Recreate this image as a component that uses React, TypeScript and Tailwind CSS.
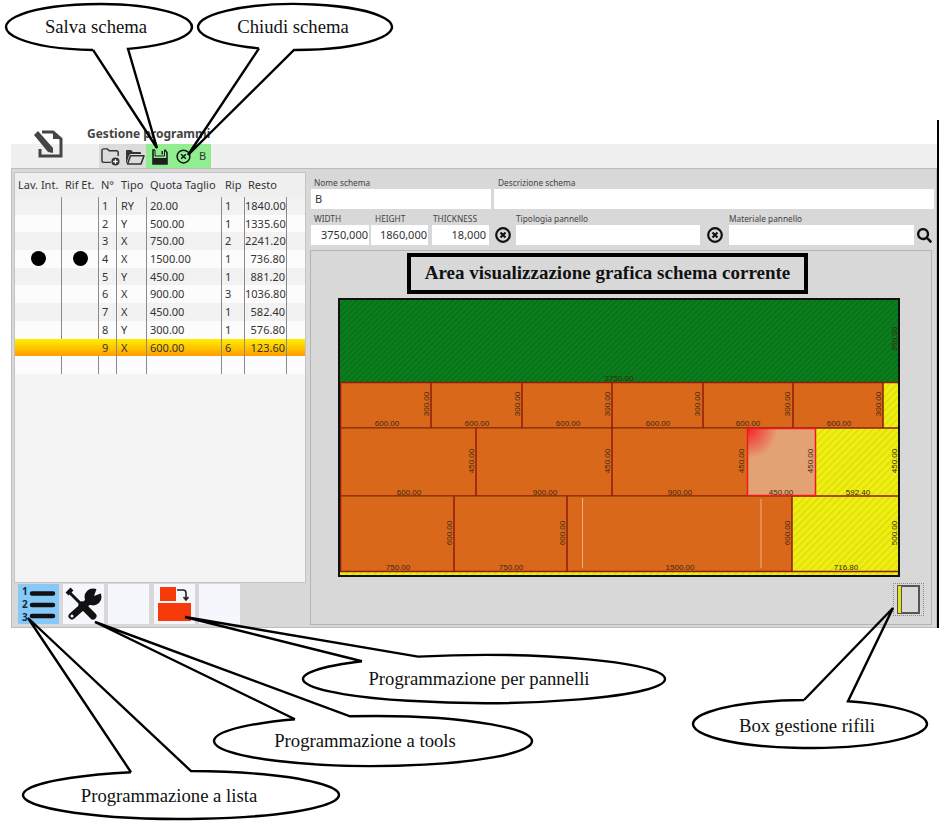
import { FaSearch } from "react-icons/fa";

const rows = [
  { n: "1", tipo: "RY", quota: "20.00", rip: "1", resto: "1840.00" },
  { n: "2", tipo: "Y", quota: "500.00", rip: "1", resto: "1335.60" },
  { n: "3", tipo: "X", quota: "750.00", rip: "2", resto: "2241.20" },
  { n: "4", tipo: "X", quota: "1500.00", rip: "1", resto: "736.80", dots: true },
  { n: "5", tipo: "Y", quota: "450.00", rip: "1", resto: "881.20" },
  { n: "6", tipo: "X", quota: "900.00", rip: "3", resto: "1036.80" },
  { n: "7", tipo: "X", quota: "450.00", rip: "1", resto: "582.40" },
  { n: "8", tipo: "Y", quota: "300.00", rip: "1", resto: "576.80" },
  { n: "9", tipo: "X", quota: "600.00", rip: "6", resto: "123.60", selected: true },
  { n: "", tipo: "", quota: "", rip: "", resto: "" },
];

const gridCols = "grid grid-cols-[47px_37px_18px_30px_75px_23px_42px_1fr]";
const cellClass = "h-full border-r border-[#8a8a8a] leading-[17px] overflow-hidden";
const inputClass = "h-[20px] bg-white text-[11px] leading-[20px] text-[#333]";
const labelClass = "text-[8.3px] leading-[12px] text-[#444]";

// tail runs from the ellipse edge at x1, out to the tip, back to the edge at x2
const callouts = [
  { cx: 99, cy: 27, rx: 93, ry: 23, x1: 93, x2: 128, tip: [157, 148], text: "Salva schema", tx: 96, ty: 33 },
  { cx: 295, cy: 27, rx: 97, ry: 23, x1: 259, x2: 294, tip: [188, 155], text: "Chiudi schema", tx: 293, ty: 33 },
  { cx: 484, cy: 679, rx: 181, ry: 24, x1: 362, x2: 418, tip: [185, 617], text: "Programmazione per pannelli", tx: 479, ty: 685 },
  { cx: 373, cy: 741, rx: 159, ry: 25, x1: 295, x2: 350, tip: [95, 622], text: "Programmazione a tools", tx: 365, ty: 747 },
  { cx: 181, cy: 795, rx: 158, ry: 24, x1: 131, x2: 191, tip: [28, 618], text: "Programmazione a lista", tx: 169, ty: 802 },
  { cx: 810, cy: 724, rx: 117, ry: 24, x1: 804, x2: 848, tip: [893, 608], text: "Box gestione rifili", tx: 807, ty: 732 },
];

const calloutPath = (c: (typeof callouts)[number]) => {
  const below = c.tip[1] > c.cy;
  const edge = (x: number) => {
    const dy = c.ry * Math.sqrt(1 - ((x - c.cx) / c.rx) ** 2);
    return below ? c.cy + dy : c.cy - dy;
  };
  return `M${c.x1} ${edge(c.x1)} L${c.tip[0]} ${c.tip[1]} L${c.x2} ${edge(c.x2)} A${c.rx} ${c.ry} 0 1 ${below ? 0 : 1} ${c.x1} ${edge(c.x1)}`;
};

const sheetLabels = [
  ["3750.00", 619, 381],
  ["600.00", 387, 426], ["600.00", 477, 426], ["600.00", 568, 426],
  ["600.00", 658, 426], ["600.00", 748, 426], ["600.00", 839, 426],
  ["600.00", 409, 495], ["900.00", 545, 495], ["900.00", 680, 495],
  ["450.00", 781, 495], ["592.40", 858, 495],
  ["750.00", 398, 570], ["750.00", 511, 570], ["1500.00", 680, 570], ["716.80", 846, 570],
] as const;

const sheetSideLabels = [
  ["350.00", 898, 339],
  ["300.00", 430, 404], ["300.00", 521, 404], ["300.00", 611, 404],
  ["300.00", 701, 404], ["300.00", 791, 404], ["300.00", 882, 404],
  ["450.00", 475, 461], ["450.00", 611, 461], ["450.00", 745, 461],
  ["450.00", 814, 461], ["450.00", 898, 461],
  ["600.00", 453, 533], ["600.00", 566, 533], ["600.00", 791, 533], ["500.00", 898, 533],
] as const;

const NoteEditIcon = () => (
  <svg width="30" height="28" viewBox="0 0 30 28">
    <path d="M9 2 H20 L28 9 V26 H7 V19" fill="none" stroke="#454545" strokeWidth="3" />
    <path d="M20 2 V9 H28 Z" fill="#454545" />
    <path d="M1 5 L5 1 L20 18 L20 23 L15 22 Z" fill="#454545" />
  </svg>
);

const FolderPlusIcon = () => (
  <svg width="19" height="18" viewBox="0 0 21 20">
    <path d="M1 14 V3 Q1 1 3 1 H7 L9 3 H17 Q19 3 19 5 V9 M1 14 Q1 16 3 16 H11" fill="none" stroke="#333" strokeWidth="1.6" />
    <circle cx="16" cy="15" r="4.5" fill="#333" />
    <path d="M16 12.5 V17.5 M13.5 15 H18.5" stroke="#fff" strokeWidth="1.4" />
  </svg>
);

const FolderOpenIcon = () => (
  <svg width="20" height="16" viewBox="0 0 20 16">
    <path d="M1 14 V2 Q1 1 2 1 H6 L8 3 H15 Q16 3 16 4 V5 H6 Q4.5 5 4 6.5 L1.5 14 Z" fill="#333" />
    <path d="M2.5 15 L5.5 6.8 H19 L16 15 Z" fill="none" stroke="#333" strokeWidth="1.6" strokeLinejoin="round" />
  </svg>
);

const SaveIcon = () => (
  <svg width="16" height="16" viewBox="0 0 16 16">
    <path d="M3 1 H1 V15 H15 V3.5 L13 1 H12.5" fill="none" stroke="#1f1f1f" strokeWidth="1.6" />
    <rect x="1" y="9" width="14" height="6" fill="#1f1f1f" />
    <path d="M3 1 V7 H12.5 V1" fill="none" stroke="#1f1f1f" strokeWidth="1" />
    <rect x="9.5" y="2" width="1.5" height="3.5" fill="#1f1f1f" />
  </svg>
);

const CloseCircleIcon = ({ size = 15, width = 1.6 }: { size?: number; width?: number }) => (
  <svg width={size} height={size} viewBox="0 0 16 16">
    <circle cx="8" cy="8" r="6.8" fill="none" stroke="#111" strokeWidth={width} />
    <path d="M5.5 5.5 L10.5 10.5 M10.5 5.5 L5.5 10.5" stroke="#111" strokeWidth={width} />
  </svg>
);

const ListIcon = () => (
  <svg width="41" height="40" viewBox="0 0 41 40">
    <path d="M14 9.5 H35 M14 21 H35 M14 32 H35" stroke="#111" strokeWidth="4.5" strokeLinecap="round" />
    <text x="4" y="11" fontSize="10" fontWeight="700" fill="#1b2a38">1</text>
    <text x="4" y="24" fontSize="10" fontWeight="700" fill="#1b2a38">2</text>
    <text x="4" y="37" fontSize="10" fontWeight="700" fill="#1b2a38">3</text>
  </svg>
);

const ToolsIcon = () => (
  <svg width="41" height="40" viewBox="0 0 41 40">
    <path d="M6 8 L18 20" stroke="#111" strokeWidth="3" />
    <path d="M4 10 L9 5" stroke="#111" strokeWidth="4" />
    <path d="M19 21 L30 32" stroke="#111" strokeWidth="7" strokeLinecap="round" />
    <path d="M9 32 L26 17" stroke="#111" strokeWidth="7" strokeLinecap="round" />
    <circle cx="30" cy="13" r="8.5" fill="#111" />
    <path d="M31 12 L35 1 L42 8 Z" fill="#f5f7fc" />
    <circle cx="9" cy="32" r="1.5" fill="#f5f7fc" />
  </svg>
);

const PanelIcon = () => (
  <svg width="34" height="34" viewBox="0 0 34 34">
    <rect x="2" y="0" width="16" height="14" fill="#f63a0a" />
    <rect x="0" y="16" width="33" height="18" fill="#f63a0a" />
    <path d="M19 3 H25 Q28 3 28 6 V12 M25.5 10 L28 13 L30.5 10" fill="none" stroke="#222" strokeWidth="1.6" />
  </svg>
);

const CuttingSheet = () => (
  <svg width="562" height="279" viewBox="338 298 562 279" className="block">
    <defs>
      <pattern id="greenHatch" width="4" height="4" patternUnits="userSpaceOnUse" patternTransform="rotate(45)">
        <rect width="4" height="4" fill="#0b7f1e" />
        <rect width="1.5" height="4" fill="#086e18" />
      </pattern>
      <pattern id="yellowHatch" width="5" height="5" patternUnits="userSpaceOnUse" patternTransform="rotate(45)">
        <rect width="5" height="5" fill="#efef10" />
        <rect width="1.5" height="5" fill="#dcdc12" />
      </pattern>
      <radialGradient id="hot" cx="0" cy="0" r="0.45">
        <stop offset="0" stopColor="#f5202a" />
        <stop offset="1" stopColor="#e3a273" />
      </radialGradient>
    </defs>
    <rect x="338" y="298" width="562" height="279" fill="url(#yellowHatch)" />
    <rect x="339" y="299" width="560" height="83" fill="url(#greenHatch)" />
    <g fill="#d9681a">
      <rect x="341" y="383" width="542" height="45" />
      <rect x="341" y="429" width="406" height="67" />
      <rect x="341" y="497" width="451" height="74" />
    </g>
    <g stroke="#8f1c0c" strokeWidth="1.5" fill="none">
      <path d="M339 382.5 H899 M339 428 H899 M339 496 H899 M339 571.5 H899" />
      <path d="M340.5 383 V571" />
      <path d="M431 383 V428 M522 383 V428 M612 383 V428 M703 383 V428 M793 383 V428 M883 383 V428" />
      <path d="M476 428 V496 M612 428 V496" />
      <path d="M454 496 V571 M567 496 V571 M792 496 V571" />
    </g>
    <rect x="747.5" y="428.5" width="68" height="67" fill="url(#hot)" stroke="#f01a1a" strokeWidth="1.5" />
    <path d="M582.5 498 V568" stroke="#e8b08a" />
    <path d="M761 499 V568" stroke="#e59a68" strokeWidth="1.5" />
    <rect x="339" y="299" width="560" height="277" fill="none" stroke="#111" strokeWidth="2" />
    <g fontSize="8" fill="#3a2a12" textAnchor="middle" fontFamily="'Liberation Sans', sans-serif">
      {sheetLabels.map(([t, x, y], i) => (
        <text key={i} x={x} y={y}>{t}</text>
      ))}
      {sheetSideLabels.map(([t, x, y], i) => (
        <text key={i} x={x} y={y} transform={`rotate(-90 ${x} ${y})`} dy="-1">{t}</text>
      ))}
    </g>
  </svg>
);

const App = () => {
  return (
    <div className="relative w-[942px] h-[823px] overflow-hidden bg-white font-['Noto_Sans',sans-serif]">
      <div className="h-[144px] pt-[126px] pl-[87px] text-[12px] leading-[15px] font-bold text-[#444]">
        Gestione programmi
      </div>

      <div className="ml-[11px] w-[926px] h-[24px] flex bg-[#f0f0f0]">
        <div className="w-[22px]" />
        <div className="w-[66px] -mt-[14px]">
          <NoteEditIcon />
        </div>
        <div className="w-[47px] flex items-center gap-[5px] pl-[2px] pt-[2px] bg-[#dcdcdc]">
          <FolderPlusIcon />
          <FolderOpenIcon />
        </div>
        <div className="w-[65px] flex items-center pl-[6px] pt-[1px] bg-[#90ee90] text-[11px] text-[#333]">
          <SaveIcon />
          <span className="ml-[8px]">
            <CloseCircleIcon />
          </span>
          <span className="ml-[8px]">B</span>
        </div>
      </div>

      <div className="ml-[11px] w-[926px] h-[460px] flex border border-[#bdbdbd] bg-[#d8d8d8]">
        <div className="w-[292px] shrink-0 ml-[2px] pt-[3px] flex flex-col">
          <div className="h-[411px] bg-[#f4f4f4] border border-[#c4c4c4] text-[11px] text-[#333]">
            <div className={`${gridCols} h-[24px] bg-[#efefef] leading-[24px] whitespace-nowrap`}>
              <span className="pl-[3px]">Lav. Int.</span>
              <span className="pl-[3px]">Rif Et.</span>
              <span className="pl-[2px]">N°</span>
              <span className="pl-[4px]">Tipo</span>
              <span className="pl-[3px]">Quota Taglio</span>
              <span className="pl-[3px]">Rip</span>
              <span className="pl-[3px]">Resto</span>
            </div>
            {rows.map((row, i) => (
              <div
                key={i}
                className={`${gridCols} h-[17.7px] ${
                  row.selected
                    ? "bg-gradient-to-b from-[#ffee00] to-[#ff9d00]"
                    : i % 2 === 0
                      ? "bg-[#f2f2f2]"
                      : "bg-[#fcfcfc]"
                }`}
              >
                <div className={`${cellClass} flex items-center justify-center ${row.selected ? "border-transparent" : ""}`}>
                  {row.dots && <span className="w-[15px] h-[15px] rounded-full bg-black" />}
                </div>
                <div className={`${cellClass} flex items-center justify-center ${row.selected ? "border-transparent" : ""}`}>
                  {row.dots && <span className="w-[15px] h-[15px] rounded-full bg-black" />}
                </div>
                <div className={`${cellClass} pl-[3px]`}>{row.n}</div>
                <div className={`${cellClass} pl-[4px]`}>{row.tipo}</div>
                <div className={`${cellClass} pl-[3px]`}>{row.quota}</div>
                <div className={`${cellClass} pl-[3px]`}>{row.rip}</div>
                <div className={`${cellClass} text-right pr-[1px]`}>{row.resto}</div>
              </div>
            ))}
          </div>
          <div className="flex gap-[4px] pt-[1px] pl-[4px]">
            <div className="w-[41px] h-[40px] bg-[#85c9f9]">
              <ListIcon />
            </div>
            <div className="w-[41px] h-[40px] bg-[#f5f7fc]">
              <ToolsIcon />
            </div>
            <div className="w-[41px] h-[40px] bg-[#f5f7fc]" />
            <div className="w-[41px] h-[40px] ml-[1px] pt-[3px] bg-[#f5f7fc] flex justify-center">
              <PanelIcon />
            </div>
            <div className="w-[41px] h-[40px] bg-[#f5f7fc]" />
          </div>
        </div>

        <div className="flex-1 pl-[4px] pt-[8px] flex flex-col">
          <div className="flex gap-[3px]">
            <div className="w-[180px] ml-[1px]">
              <div className={`${labelClass} pl-[3px]`}>Nome schema</div>
              <div className={`${inputClass} pl-[4px]`}>B</div>
            </div>
            <div className="w-[440px]">
              <div className={`${labelClass} pl-[4px]`}>Descrizione schema</div>
              <div className={inputClass} />
            </div>
          </div>

          <div className="flex items-end mt-[4px]">
            <div className="w-[58px] ml-[1px]">
              <div className={`${labelClass} pl-[3px]`}>WIDTH</div>
              <div className={`${inputClass} text-right pr-[1px]`}>3750,000</div>
            </div>
            <div className="w-[57px] ml-[2px]">
              <div className={`${labelClass} pl-[4px]`}>HEIGHT</div>
              <div className={`${inputClass} text-right pr-[1px]`}>1860,000</div>
            </div>
            <div className="w-[57px] ml-[4px]">
              <div className={`${labelClass} pl-[1px]`}>THICKNESS</div>
              <div className={`${inputClass} text-right pr-[3px]`}>18,000</div>
            </div>
            <div className="w-[27px] h-[20px] flex items-center justify-center">
              <CloseCircleIcon size={16} width={2.2} />
            </div>
            <div className="w-[184px]">
              <div className={labelClass}>Tipologia pannello</div>
              <div className={inputClass} />
            </div>
            <div className="w-[29px] h-[20px] flex items-center justify-center">
              <CloseCircleIcon size={16} width={2.2} />
            </div>
            <div className="w-[185px]">
              <div className={labelClass}>Materiale pannello</div>
              <div className={inputClass} />
            </div>
            <div className="w-[20px] h-[20px] flex items-center justify-center">
              <FaSearch className="w-[15px] h-[15px] text-[#111]" />
            </div>
          </div>

          <div className="mt-[5px] w-[622px] h-[375px] border border-[#b4b4b4] pl-[27px] pt-[2px]">
            <div className="ml-[69px] w-[401px] h-[41px] border-[4px] border-black flex items-center justify-center font-['Liberation_Serif',serif] font-bold text-[19px] text-[#111]">
              Area visualizzazione grafica schema corrente
            </div>
            <div className="mt-[4px]">
              <CuttingSheet />
            </div>
            <div className="ml-[555px] mt-[6px] w-[31px] h-[33px] border border-dotted border-[#8a8a8a] flex items-stretch pl-[3px] py-[1px]">
              <div className="w-[5px] bg-[#e4e21a] border border-[#555]" />
              <div className="w-[18px] border-2 border-l-0 border-[#555]" />
            </div>
          </div>
        </div>
      </div>

      <svg className="absolute inset-0 w-full h-full pointer-events-none" viewBox="0 0 942 823">
        <path d="M938 120 V628" stroke="#000" strokeWidth="2" />
        {callouts.map((c) => (
          <g key={c.text}>
            <path d={calloutPath(c)} fill="none" stroke="#000" strokeWidth="2.4" />
            <text x={c.tx} y={c.ty} textAnchor="middle" fontSize="18.7" fill="#111" fontFamily="'Liberation Serif', serif">
              {c.text}
            </text>
          </g>
        ))}
      </svg>
    </div>
  );
};

export default App;
